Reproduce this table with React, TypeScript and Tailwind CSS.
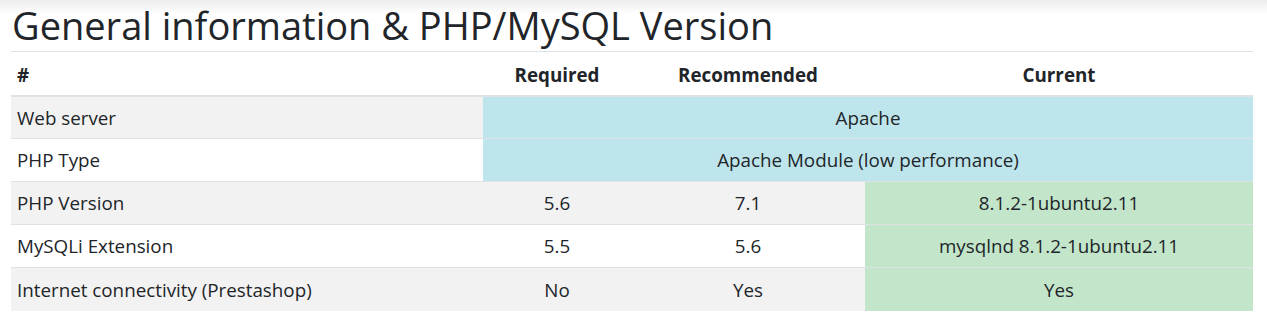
const ROWS = [
  { name: "Web server", span: "Apache" },
  { name: "PHP Type", span: "Apache Module (low performance)" },
  { name: "PHP Version", req: "5.6", rec: "7.1", cur: "8.1.2-1ubuntu2.11" },
  { name: "MySQLi Extension", req: "5.5", rec: "5.6", cur: "mysqlnd 8.1.2-1ubuntu2.11" },
  { name: "Internet connectivity (Prestashop)", req: "No", rec: "Yes", cur: "Yes" },
];

export default function App() {
  return (
    <div
      className="min-h-[327px] bg-white text-[#212529] px-[11px] bg-gradient-to-b from-[#ececec] to-white to-[14px] bg-no-repeat"
      style={{ fontFamily: '"Open Sans", "Noto Sans", sans-serif' }}
    >
      <h1 className="text-[38px] leading-[50px] font-normal pl-[1px] pb-[1px]">
        General information &amp; PHP/MySQL Version
      </h1>
      <table className="w-[1242px] border-collapse text-[18.8px]">
        <colgroup>
          <col className="w-[472px]" />
          <col className="w-[148px]" />
          <col className="w-[234px]" />
          <col className="w-[388px]" />
        </colgroup>
        <thead>
          <tr className="h-[44px] border-t border-[#dee2e6] border-b-2">
            <th className="text-left px-[6px] font-bold pt-[3px]">#</th>
            <th className="font-bold pt-[3px]">Required</th>
            <th className="font-bold pt-[3px]">Recommended</th>
            <th className="font-bold pt-[3px]">Current</th>
          </tr>
        </thead>
        <tbody>
          {ROWS.map((r, i) => (
            <tr key={r.name} className={`h-[43px] border-t border-[#dee2e6] ${i % 2 === 0 ? "bg-[#f2f2f2]" : "bg-white"}`}>
              <td className="px-[6px] pt-[1px]">{r.name}</td>
              {r.span ? (
                <td colSpan={3} className="text-center bg-[#bee5eb] pt-[1px]">{r.span}</td>
              ) : (
                <>
                  <td className="text-center pt-[1px]">{r.req}</td>
                  <td className="text-center pt-[1px]">{r.rec}</td>
                  <td className="text-center bg-[#c3e6cb] pt-[1px]">{r.cur}</td>
                </>
              )}
            </tr>
          ))}
        </tbody>
      </table>
    </div>
  );
}
